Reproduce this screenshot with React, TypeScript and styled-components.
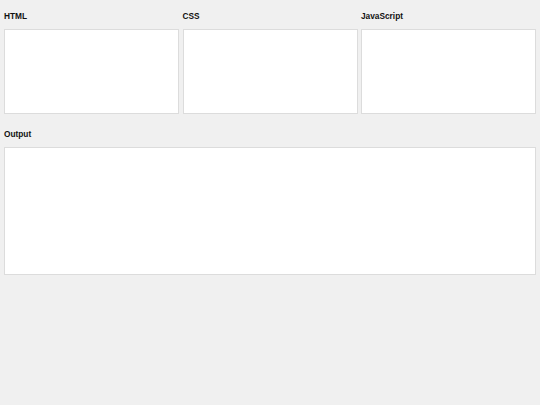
import React from "react";
import styled, { createGlobalStyle } from "styled-components";

const GlobalStyle = createGlobalStyle`
  html, body {
    margin: 0;
    padding: 0;
    background: #f0f0f0;
    font-family: "Liberation Sans", Arial, sans-serif;
  }
`;

const Page = styled.main`
  padding: 11px 4px 4px;
  display: grid;
  gap: 15px;
`;

const EditorRow = styled.div`
  display: grid;
  grid-template-columns: repeat(3, 1fr);
  gap: 3.5px;
`;

const Panel = styled.section`
  display: grid;
  gap: 7px;
`;

const Label = styled.h2`
  margin: 0;
  font-size: 8.3px;
  line-height: 11px;
  font-weight: 700;
  color: #111;
`;

const Editor = styled.textarea<{ $height: number }>`
  box-sizing: border-box;
  width: 100%;
  height: ${(p) => p.$height}px;
  margin: 0;
  padding: 4px;
  border: 1px solid #dcdcdc;
  background: #fff;
  resize: none;
  font-family: "Liberation Mono", monospace;
  font-size: 9px;
  outline: none;
  display: block;
`;

const OutputFrame = styled.div`
  box-sizing: border-box;
  height: 128px;
  border: 1px solid #dcdcdc;
  background: #fff;
`;

const editors = ["HTML", "CSS", "JavaScript"];

export default function App() {
  return (
    <>
      <GlobalStyle />
      <Page>
        <EditorRow>
          {editors.map((name) => (
            <Panel key={name}>
              <Label>{name}</Label>
              <Editor $height={85} spellCheck={false} />
            </Panel>
          ))}
        </EditorRow>
        <Panel>
          <Label>Output</Label>
          <OutputFrame />
        </Panel>
      </Page>
    </>
  );
}
